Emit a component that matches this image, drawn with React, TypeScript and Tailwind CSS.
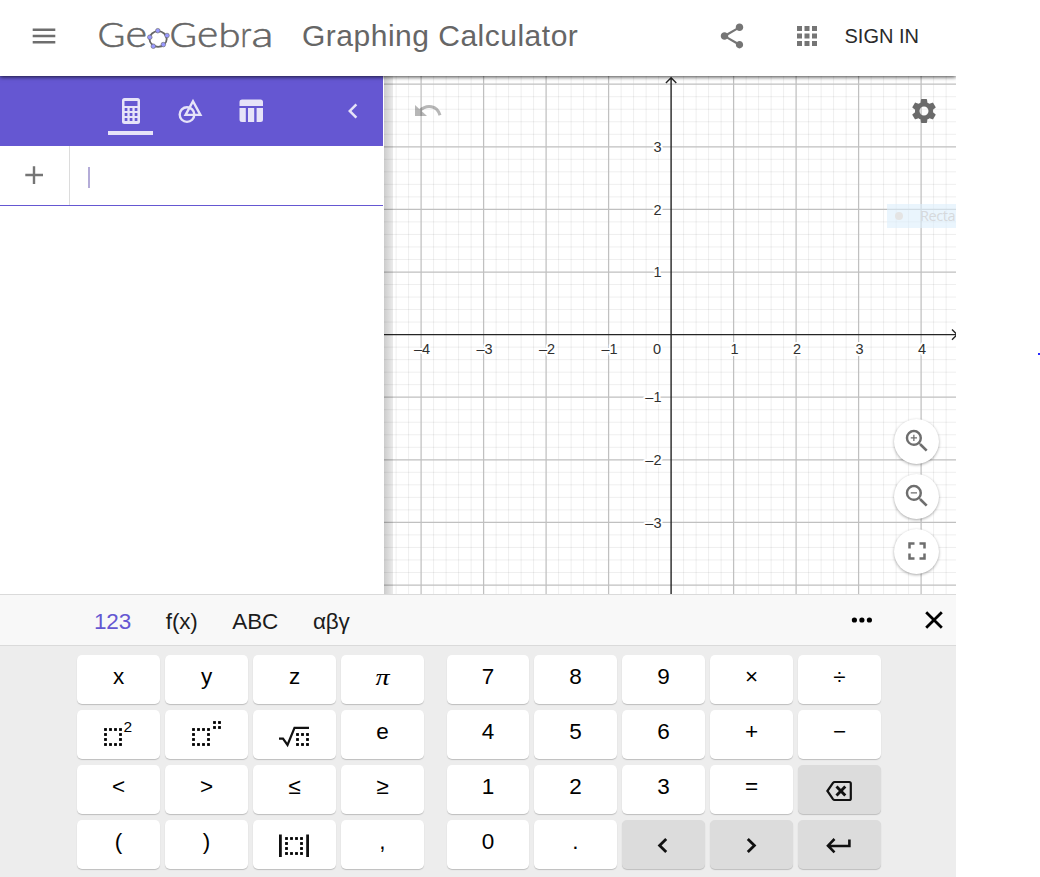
import React from "react";
import {
  MdApps,
  MdChevronLeft,
  MdFullscreen,
  MdSettings,
  MdShare,
  MdZoomIn,
  MdZoomOut,
} from "react-icons/md";

const ORIGIN_X = 287.1;
const ORIGIN_Y = 258.6;
const UNIT = 62.6;
const UNIT_X = 62.5;

function Letter({ x, w, size = 34, children }: { x: number; w: number; size?: number; children: string }) {
  return (
    <text x={x} y={29.2} fontSize={size} textLength={w} lengthAdjust="spacingAndGlyphs">
      {children}
    </text>
  );
}

function Logo() {
  const pts = [
    [59.8, 12.7],
    [69, 17.5],
    [65.3, 26.6],
    [55.3, 28.2],
    [51.8, 19.2],
  ];
  return (
    <svg width="180" height="40" className="block overflow-visible" role="img" aria-label="GeoGebra">
      <g fill="#666" fontWeight="300" fontFamily="Lato, sans-serif" stroke="#666" strokeWidth="0.6">
        <Letter x={-0.4} w={27.8}>G</Letter>
        <Letter x={27.4} w={21.6} size={37}>e</Letter>
        <Letter x={71.6} w={27.4}>G</Letter>
        <Letter x={99} w={21.2} size={37}>e</Letter>
        <Letter x={120.6} w={22}>b</Letter>
        <Letter x={142.6} w={10.8} size={36}>r</Letter>
        <Letter x={153.4} w={22} size={36}>a</Letter>
      </g>
      <ellipse cx="60.1" cy="21" rx="8.6" ry="7.8" fill="none" stroke="#666" strokeWidth="1.8" />
      {pts.map(([x, y]) => (
        <circle key={x} cx={x} cy={y} r="2.3" fill="#9999ff" stroke="#666" strokeWidth="0.6" />
      ))}
    </svg>
  );
}

function Header() {
  return (
    <header className="relative z-20 flex h-[76px] items-center bg-white text-[#666] shadow-[0_1px_4px_rgba(0,0,0,0.75)]">
      <svg width="24" height="16" className="ml-8 mt-[-4px] shrink-0">
        <path d="M.7 1.7H23.3M.7 8H23.3M.7 14.3H23.3" stroke="#6e6e6e" strokeWidth="2.4" />
      </svg>
      <div className="ml-[42px] h-10 w-[180px] shrink-0">
        <Logo />
      </div>
      <h1 className="ml-[24px] mt-[-4px] w-[299px] whitespace-nowrap font-['Liberation_Sans',sans-serif] text-[30px] font-normal leading-10 tracking-[0.5px]">
        Graphing Calculator
      </h1>
      <MdShare className="ml-[116px] mt-[-4px] size-[30px] shrink-0 text-[#757575]" />
      <MdApps className="ml-[45px] mt-[-4px] size-[30px] shrink-0 text-[#757575]" />
      <button className="ml-[22.5px] mt-[-4px] whitespace-nowrap text-[20px] text-[#2a2a2a]">SIGN IN</button>
    </header>
  );
}

function CalculatorIcon() {
  return (
    <svg width="18" height="26" className="block">
      <rect width="18" height="26" rx="2.5" fill="#e6e3f8" />
      <path d="M2.5 3h13v5h-13z" fill="#6557d2" />
      {[10, 15, 20].map((y) =>
        [2.7, 7.7, 12.7].map((x) => <rect key={`${x}-${y}`} x={x} y={y} width="2.7" height="3" fill="#6557d2" />)
      )}
    </svg>
  );
}

function AlgebraPanel() {
  return (
    <aside className="flex w-[383px] shrink-0 flex-col bg-white">
      <nav className="flex h-[70px] items-start bg-[#6557d2] text-[#e6e3f8]">
        <div className="ml-[108px] mt-[22px] flex h-[37px] w-[45px] justify-center border-b-4 border-[#e6e3f8]">
          <CalculatorIcon />
        </div>
        <svg width="26" height="27" className="ml-[25px] mt-[22px]">
          <g fill="none" stroke="#e6e3f8" strokeWidth="2.4">
            <circle cx="9" cy="16.6" r="7.3" />
            <path d="M15 3.2L22.4 16.9H7.6z" />
          </g>
        </svg>
        <svg width="25" height="24" className="ml-[35px] mt-[23px]">
          <path
            d="M3.5.5h18a2.5 2.5 0 012.5 2.5v4H.5V3A2.5 2.5 0 013.5.5zM.5 9h6.3v14H3a2.5 2.5 0 01-2.5-2.5zM9 9h6.2v14H9zM17.6 9H24v11.5a2.5 2.5 0 01-2.5 2.5h-3.9z"
            fill="#e6e3f8"
          />
        </svg>
        <MdChevronLeft className="ml-[74px] mt-[19.5px] size-[30px]" />
      </nav>
      <div className="flex h-[60px] border-b border-[#6557d2]">
        <div className="flex w-[70px] items-center border-r border-[#dcdcdc]">
          <svg width="18" height="18" className="-mt-px ml-[25px]">
            <path d="M.3 9H18M9 .3V18" stroke="#757575" strokeWidth="2.4" />
          </svg>
        </div>
        <div className="ml-[18px] mt-[21px] h-[21px] w-[2px] bg-[#b4acd8]" />
      </div>
    </aside>
  );
}

function Graph() {
  const minorX = Array.from({ length: 47 }, (_, i) => i - 23).filter((i) => i % 5);
  const minorY = Array.from({ length: 43 }, (_, i) => i - 21).filter((i) => i % 5);
  const major = [-4, -3, -2, -1, 1, 2, 3, 4];
  const name = (n: number) => (n < 0 ? `–${-n}` : `${n}`);
  return (
    <svg width="572" height="518" className="block">
      <rect width="572" height="518" fill="#fff" />
      <g stroke="#000" strokeOpacity="0.065">
        {minorX.map((i) => (
          <path key={i} d={`M${ORIGIN_X + (i * UNIT_X) / 5} 0V518`} />
        ))}
        {minorY.map((i) => (
          <path key={i} d={`M0 ${ORIGIN_Y + (i * UNIT) / 5}H572`} />
        ))}
      </g>
      <g stroke="#c0c0c0" strokeWidth="1.25">
        {major.map((i) => (
          <path key={i} d={`M${ORIGIN_X + i * UNIT_X} 0V518M0 ${ORIGIN_Y + i * UNIT}H572`} />
        ))}
      </g>
      <g stroke="#252525" strokeWidth="1.4" fill="none">
        <path d={`M${ORIGIN_X} 1.5V518M281.9 7L287.1 1.8L292.3 7`} />
        <path d={`M0 ${ORIGIN_Y}H572M568 253.5L573.2 258.6L568 263.8`} />
      </g>
      <g
        fill="#303030"
        fontSize="14.5"
        fontFamily="'Liberation Sans', sans-serif"
        stroke="#fff"
        strokeWidth="4"
        strokeLinejoin="round"
        paintOrder="stroke"
      >
        {major.map((i) => (
          <text key={i} x={ORIGIN_X + 1 + i * UNIT_X} y="278.4" textAnchor="middle">
            {name(i)}
          </text>
        ))}
        <text x="273" y="278.4" textAnchor="middle">0</text>
        {[-3, -2, -1, 1, 2, 3].map((i) => (
          <text key={i} x="277.5" y={ORIGIN_Y + 5.2 - i * UNIT} textAnchor="end">
            {name(i)}
          </text>
        ))}
      </g>
    </svg>
  );
}

function RoundButton({ children }: { children: React.ReactNode }) {
  return (
    <button className="flex size-[45px] items-center justify-center rounded-full bg-white pb-[2px] text-[#6e6e6e] shadow-[0_1px_3px_rgba(0,0,0,0.35)]">
      {children}
    </button>
  );
}

function GraphView() {
  return (
    <section className="relative ml-px w-[572px] overflow-hidden">
      <Graph />
      <div className="absolute left-0 top-0 h-full w-[9px] bg-linear-to-r from-black/20 to-black/8" />
      <svg width="28" height="14" className="absolute left-[31px] top-[28px]" opacity="0.28">
        <path d="M0 1V12H12Z" fill="#000" />
        <path d="M4.5 6.8C12 0 22 1.5 25 11.2" fill="none" stroke="#000" strokeWidth="3" />
      </svg>
      <MdSettings className="absolute left-[525px] top-[20px] size-[30px] text-[#6b6b6b]" />
      <div className="absolute left-[503px] top-[128px] flex h-6 w-[69px] items-center overflow-hidden bg-[#dceefc]/60 font-['Open_Sans',sans-serif] text-[14.5px] text-[#d6d9dc]">
        <span className="ml-2 size-2 shrink-0 rounded-full bg-[#e4e4e4]" />
        <span className="ml-[17px] tracking-[-0.4px]">Recta</span>
      </div>
      <div className="absolute left-[510px] top-[343px] flex flex-col gap-[10px]">
        <RoundButton>
          <MdZoomIn className="size-[30px]" />
        </RoundButton>
        <RoundButton>
          <MdZoomOut className="size-[30px]" />
        </RoundButton>
        <RoundButton>
          <MdFullscreen className="size-[30px]" />
        </RoundButton>
      </div>
    </section>
  );
}

function DottedBox({ x, y, n }: { x: number; y: number; n: number }) {
  const dots: [number, number][] = [];
  for (let r = 0; r < n; r++)
    for (let c = 0; c < n; c++) if (r === 0 || c === 0 || r === n - 1 || c === n - 1) dots.push([x + c * 5, y + r * 5]);
  return (
    <g fill="#000" stroke="none">
      {dots.map(([a, b]) => (
        <rect key={`${a}-${b}`} x={a + 0.1} y={b + 0.1} width="2.8" height="2.8" />
      ))}
    </g>
  );
}

const drawn: Record<string, React.ReactNode> = {
  square: (
    <>
      <DottedBox x={27} y={18} n={4} />
      <text x="46.5" y="22" fontSize="15.5" fill="#000" stroke="none">2</text>
    </>
  ),
  power: (
    <>
      <DottedBox x={27} y={18} n={4} />
      <DottedBox x={48} y={11} n={2} />
    </>
  ),
  root: (
    <>
      <path d="M26 28.7H30L34.5 35L41.5 17.8H56" strokeWidth="2.2" />
      <DottedBox x={43} y={23} n={3} />
    </>
  ),
  abs: (
    <>
      <path d="M27.4 14.5V37M54.6 14.5V37" strokeWidth="2.8" />
      <DottedBox x={32} y={17} n={4} />
    </>
  ),
  left: <path d="M44.2 18.9L37.6 25.4L44.2 31.9" strokeWidth="2.8" />,
  right: <path d="M37.8 18.9L44.4 25.4L37.8 31.9" strokeWidth="2.8" />,
  enter: <path d="M51.4 19.5V26H30.5M36.5 19L30 25.7L36.5 32.4" strokeWidth="2.6" />,
  backspace: (
    <>
      <path d="M29.4 26L35 17.9Q35.7 17 36.7 17H51.2Q52.8 17 52.8 18.6V33.4Q52.8 35 51.2 35H36.7Q35.7 35 35 34.1Z" strokeWidth="2.2" />
      <path d="M38.5 21.5L47.3 30.5M47.3 21.5L38.5 30.5" strokeWidth="2.9" />
    </>
  ),
};

function Key({ id }: { id: string }) {
  const grey = ["left", "right", "enter", "backspace"].includes(id);
  const base = "flex h-[49px] w-full items-center justify-center rounded-[5px] shadow-[0_1px_1px_rgba(0,0,0,0.2)]";
  if (drawn[id])
    return (
      <button aria-label={id} className={`${base} ${grey ? "bg-[#dcdcdc]" : "bg-white"}`}>
        <svg width="83" height="49" fill="none" stroke="#111">
          {drawn[id]}
        </svg>
      </button>
    );
  return (
    <button className={`${base} bg-white pb-[5px] text-[22.5px] leading-none text-black`}>
      {id === "π" ? (
        <span className="mt-[2px] inline-block scale-x-125 font-['Liberation_Serif',serif] italic">π</span>
      ) : (
        id
      )}
    </button>
  );
}

const leftKeys = ["x", "y", "z", "π", "square", "power", "root", "e", "<", ">", "≤", "≥", "(", ")", "abs", ","];
const rightKeys = [
  "7", "8", "9", "×", "÷",
  "4", "5", "6", "+", "−",
  "1", "2", "3", "=", "backspace",
  "0", ".", "left", "right", "enter",
];

function Keyboard() {
  return (
    <footer className="flex h-[283px] flex-col bg-[#ededed]">
      <div className="flex h-[52px] items-center border-y border-[#dadada] bg-[#f8f8f8] text-[22.5px] text-[#1c1c1c]">
        <div className="ml-[94px] mt-[4px] flex gap-[34.7px] tracking-[-0.15px]">
          <span className="text-[#6557d2]">123</span>
          <span>f(x)</span>
          <span>ABC</span>
          <span>αβγ</span>
        </div>
        <div className="ml-auto flex items-center gap-[53px] pr-[13px]">
          <svg width="21" height="6">
            <g fill="#000">
              <circle cx="3.4" cy="3" r="2.6" />
              <circle cx="10.9" cy="3" r="2.6" />
              <circle cx="18.4" cy="3" r="2.6" />
            </g>
          </svg>
          <svg width="18" height="18">
            <path d="M1.2 1.2L16.8 16.8M16.8 1.2L1.2 16.8" stroke="#000" strokeWidth="2.8" />
          </svg>
        </div>
      </div>
      <div className="ml-[77px] mt-[9px] flex gap-[23px]">
        <div className="grid grid-cols-[83px_83px_83px_83px] gap-x-[5px] gap-y-[6px]">
          {leftKeys.map((k) => (
            <Key key={k} id={k} />
          ))}
        </div>
        <div className="grid grid-cols-[82px_83px_83px_83px_83px] gap-x-[5px] gap-y-[6px]">
          {rightKeys.map((k) => (
            <Key key={k} id={k} />
          ))}
        </div>
      </div>
    </footer>
  );
}

export default function App() {
  return (
    <div className="relative h-[877px] w-[1040px] overflow-hidden bg-white font-['Liberation_Sans',sans-serif]">
      <main className="flex h-full w-[956px] flex-col overflow-hidden">
        <Header />
        <div className="flex h-[518px] overflow-hidden">
          <AlgebraPanel />
          <GraphView />
        </div>
        <Keyboard />
      </main>
      <span className="absolute left-[1038px] top-[353px] h-[2px] w-[2px] bg-[#2a2aff]" />
    </div>
  );
}
